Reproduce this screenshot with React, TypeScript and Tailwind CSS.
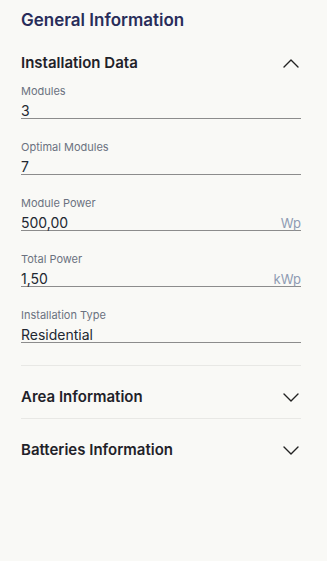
type Field = { label: string; value: string; unit?: string };

const fields: Field[] = [
  { label: 'Modules', value: '3' },
  { label: 'Optimal Modules', value: '7' },
  { label: 'Module Power', value: '500,00', unit: 'Wp' },
  { label: 'Total Power', value: '1,50', unit: 'kWp' },
  { label: 'Installation Type', value: 'Residential' },
];

function Chevron({ up }: { up?: boolean }) {
  return (
    <svg width="16" height="9" viewBox="0 0 16 9" fill="none" className="mr-[2px] text-[#222]">
      <polyline
        points={up ? '1,8 8,1 15,8' : '1,1 8,8 15,1'}
        stroke="currentColor"
        strokeWidth="1.4"
        strokeLinecap="round"
        strokeLinejoin="round"
      />
    </svg>
  );
}

function FieldRow({ label, value, unit }: Field) {
  return (
    <div className="flex flex-col">
      <span className="text-[11px] leading-[14px] text-[#6b7280]">{label}</span>
      <div className="mt-[6px] flex items-end justify-between border-b border-[#8c8c8c]">
        <span className="text-[14px] leading-[14px] text-[#222831]">{value}</span>
        {unit && <span className="text-[13px] leading-[13px] text-[#8e9bb3]">{unit}</span>}
      </div>
    </div>
  );
}

function Section({ title }: { title: string }) {
  return (
    <div className="flex h-[52px] items-center justify-between pt-[10px]">
      <span className="text-[15px] font-semibold text-[#1f2229]">{title}</span>
      <Chevron />
    </div>
  );
}

export default function App() {
  return (
    <div
      className="min-h-[561px] w-full bg-[#f9f9f6] pl-[21px] pr-[26px]"
      style={{ fontFamily: 'Inter, "Noto Sans", sans-serif' }}
    >
      <h1 className="pt-[9px] text-[17px] leading-[22px] font-semibold text-[#282d5a]">General Information</h1>
      <div className="mt-[22px] flex items-center justify-between">
        <span className="text-[15px] leading-[20px] font-semibold text-[#1f2229]">Installation Data</span>
        <Chevron up />
      </div>
      <div className="mt-[11px] flex flex-col gap-[21px]">
        {fields.map((f) => (
          <FieldRow key={f.label} {...f} />
        ))}
      </div>
      <div className="mt-[22px] border-t border-[#e8e8e5]" />
      <Section title="Area Information" />
      <div className="border-t border-[#e8e8e5]" />
      <Section title="Batteries Information" />
    </div>
  );
}
